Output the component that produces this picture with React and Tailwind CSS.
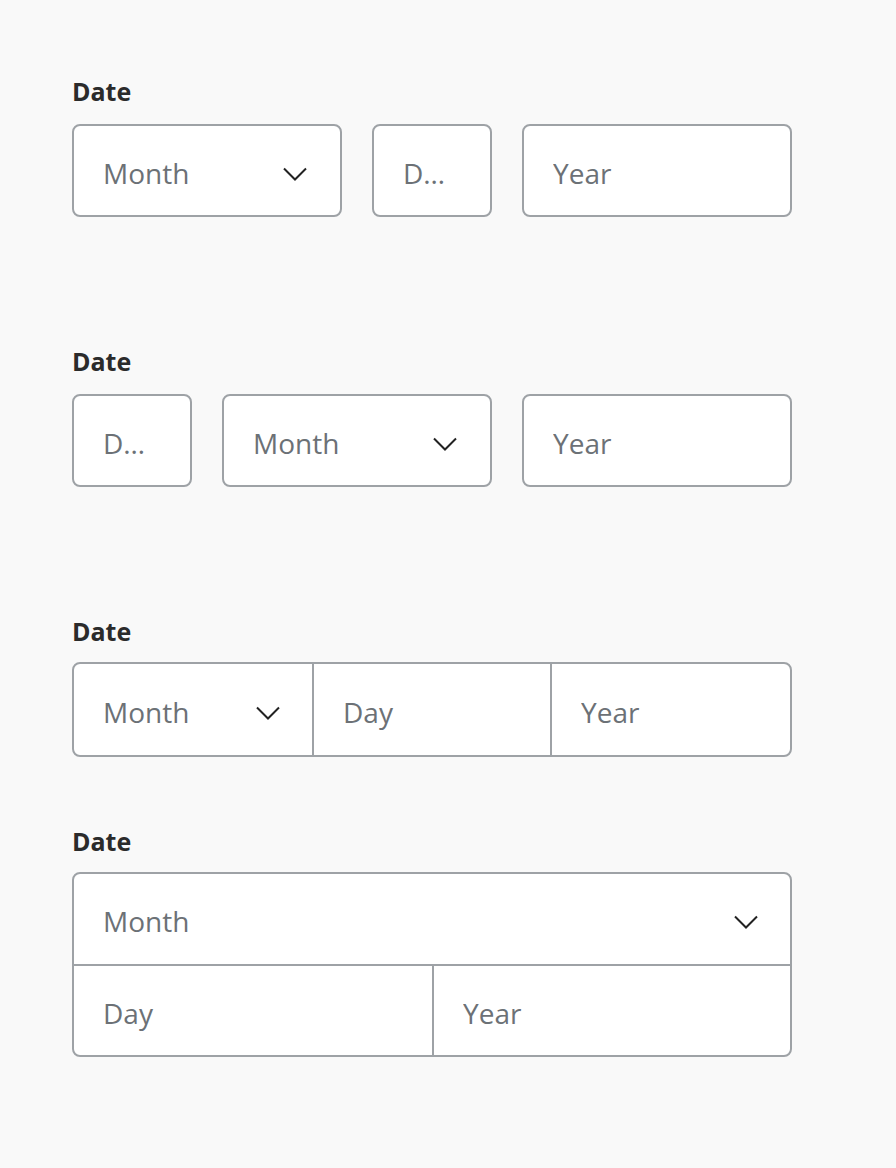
import React from "react";

const font = { fontFamily: '"Open Sans", "Noto Sans", sans-serif' };

const Chevron = () => (
  <svg width="24" height="14" viewBox="0 0 24 14" fill="none" className="shrink-0 mt-[2px]">
    <path d="M1 1.5 L12 12.5 L23 1.5" stroke="#222222" strokeWidth="2" />
  </svg>
);

const Label = ({ className = "" }) => (
  <div className={`text-[25px] leading-[32px] font-bold text-[#2b2b2b] ${className}`}>
    Date
  </div>
);

const Field = ({ text, select, className = "" }) => (
  <div
    className={`flex items-center bg-white border-2 border-[#9ea2a6] rounded-[8px] h-[93px] pt-[4px] pl-[29px] pr-[33px] ${className}`}
  >
    <span className="flex-1 min-w-0 truncate text-[28px] text-[#6c7176]">{text}</span>
    {select && <Chevron />}
  </div>
);

const Cell = ({ text, select, className = "" }) => (
  <div className={`flex items-center min-w-0 pt-[4px] pl-[29px] pr-[32px] ${className}`}>
    <span className="flex-1 min-w-0 truncate text-[28px] text-[#6c7176]">{text}</span>
    {select && <Chevron />}
  </div>
);

export default function App() {
  return (
    <div className="min-h-screen w-full bg-[#f9f9f9] pt-[75px] pl-[72px]" style={font}>
      <div className="w-[720px] flex flex-col">
        <Label className="mb-[17px]" />
        <div className="flex gap-[30px]">
          <Field text="Month" select className="w-[270px]" />
          <Field text="Day" className="w-[120px] !pr-[42px]" />
          <Field text="Year" className="w-[270px]" />
        </div>

        <Label className="mt-[128px] mb-[17px]" />
        <div className="flex gap-[30px]">
          <Field text="Day" className="w-[120px] !pr-[42px]" />
          <Field text="Month" select className="w-[270px]" />
          <Field text="Year" className="w-[270px]" />
        </div>

        <Label className="mt-[128px] mb-[15px]" />
        <div className="flex h-[95px] bg-white border-2 border-[#9ea2a6] rounded-[8px]">
          <Cell text="Month" select className="w-[238px]" />
          <Cell text="Day" className="w-[238px] border-l-2 border-[#9ea2a6]" />
          <Cell text="Year" className="flex-1 border-l-2 border-[#9ea2a6]" />
        </div>

        <Label className="mt-[68px] mb-[15px]" />
        <div className="flex flex-col bg-white border-2 border-[#9ea2a6] rounded-[8px]">
          <Cell text="Month" select className="h-[90px] !pr-[32px]" />
          <div className="flex h-[91px] border-t-2 border-[#9ea2a6]">
            <Cell text="Day" className="w-[358px]" />
            <Cell text="Year" className="flex-1 border-l-2 border-[#9ea2a6]" />
          </div>
        </div>
      </div>
    </div>
  );
}
